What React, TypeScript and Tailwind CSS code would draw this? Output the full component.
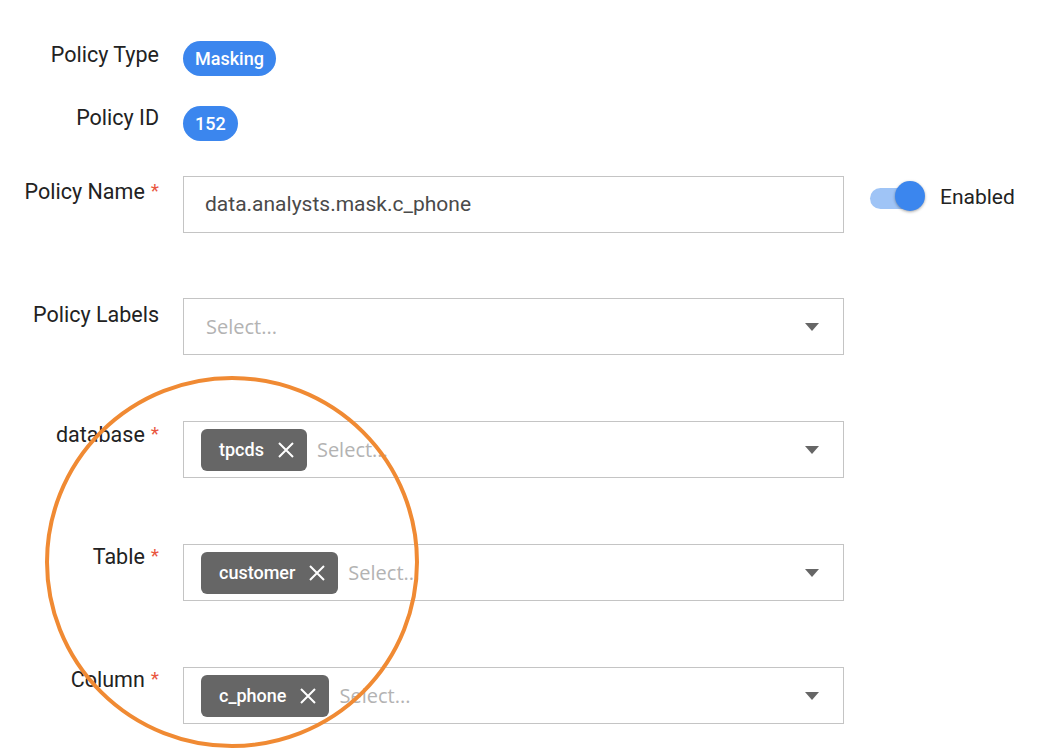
const font = { fontFamily: "Roboto, 'Noto Sans', sans-serif" };

function Label({ text, required }: { text: string; required?: boolean }) {
  return (
    <div className="w-[159px] shrink-0 text-right text-[21.5px] leading-[26px] text-[#222]">
      {text}
      {required && <span className="ml-[6px] text-[19px] text-[#e9573f] relative -top-[2px]">*</span>}
    </div>
  );
}

function Chip({ text }: { text: string }) {
  return (
    <div className="flex h-[42px] items-center rounded-[6px] bg-[#666] pl-[18px] pr-[13px] text-[18px] font-medium text-white">
      <span>{text}</span>
      <svg width="16" height="16" viewBox="0 0 16 16" className="ml-[14px]">
        <path d="M1 1l14 14M15 1L1 15" stroke="#fff" strokeWidth="2" />
      </svg>
    </div>
  );
}

function Caret() {
  return (
    <svg width="14" height="8" viewBox="0 0 14 8" className="mr-[24px] shrink-0">
      <path d="M0 0h14L7 8z" fill="#666" />
    </svg>
  );
}

function SelectBox({ chip }: { chip?: string }) {
  return (
    <div className="flex h-[57px] w-[661px] items-center border border-[#c4c4c4] bg-white pl-[17px]">
      {chip && <Chip text={chip} />}
      <span
        className={`flex-1 text-[20px] text-[#b3b3b3] ${chip ? "ml-[10px]" : "ml-[5px]"}`}
        style={{ fontFamily: "'Open Sans', sans-serif" }}
      >
        Select...
      </span>
      <Caret />
    </div>
  );
}

export default function App() {
  return (
    <div className="relative min-h-[752px] w-[1046px] overflow-hidden bg-white" style={font}>
      <div className="flex flex-col pt-[41px]">
        {/* Policy Type */}
        <div className="flex items-start gap-[24px]">
          <div className="pt-[1px]">
            <Label text="Policy Type" />
          </div>
          <div className="flex h-[35px] items-center rounded-full bg-[#3b86ee] px-[12px] text-[18px] font-medium text-white">
            Masking
          </div>
        </div>

        {/* Policy ID */}
        <div className="mt-[30px] flex items-start gap-[24px]">
          <div className="-mt-[1px]">
            <Label text="Policy ID" />
          </div>
          <div className="flex h-[35px] items-center rounded-full bg-[#3b86ee] px-[12px] text-[18px] font-medium text-white">
            152
          </div>
        </div>

        {/* Policy Name */}
        <div className="mt-[35px] flex items-start gap-[24px]">
          <div className="pt-[3px]">
            <Label text="Policy Name" required />
          </div>
          <div className="flex h-[57px] w-[661px] items-center border border-[#c4c4c4] pl-[21px] text-[21px] text-[#4a4a4a]">
            data.analysts.mask.c_phone
          </div>
          <div className="ml-[2px] flex items-center pt-[3px]">
            <div className="relative h-[51px] w-[56px]">
              <div className="absolute left-[0px] top-[9px] h-[21px] w-[54px] rounded-full bg-[#9fc4f6]" />
              <div className="absolute left-[25px] top-[2px] h-[30px] w-[30px] rounded-full bg-[#3b86ee] shadow-[0_1px_3px_rgba(0,0,0,0.35)]" />
            </div>
            <span className="ml-[14px] -mt-[14px] text-[21px] text-[#222]">Enabled</span>
          </div>
        </div>

        {/* Policy Labels */}
        <div className="mt-[65px] flex items-start gap-[24px]">
          <div className="pt-[4px]">
            <Label text="Policy Labels" />
          </div>
          <SelectBox />
        </div>

        {/* database */}
        <div className="mt-[66px] flex items-start gap-[24px]">
          <div className="pt-[1px]">
            <Label text="database" required />
          </div>
          <SelectBox chip="tpcds" />
        </div>

        {/* Table */}
        <div className="mt-[66px] flex items-start gap-[24px]">
          <div className="pt-0">
            <Label text="Table" required />
          </div>
          <SelectBox chip="customer" />
        </div>

        {/* Column */}
        <div className="mt-[66px] flex items-start gap-[24px]">
          <div className="pt-0">
            <Label text="Column" required />
          </div>
          <SelectBox chip="c_phone" />
        </div>
      </div>

      {/* annotation circle */}
      <svg className="pointer-events-none absolute left-0 top-0" width="1046" height="752">
        <ellipse cx="232" cy="562" rx="185" ry="184" fill="none" stroke="#f08a33" strokeWidth="4" />
      </svg>
    </div>
  );
}
